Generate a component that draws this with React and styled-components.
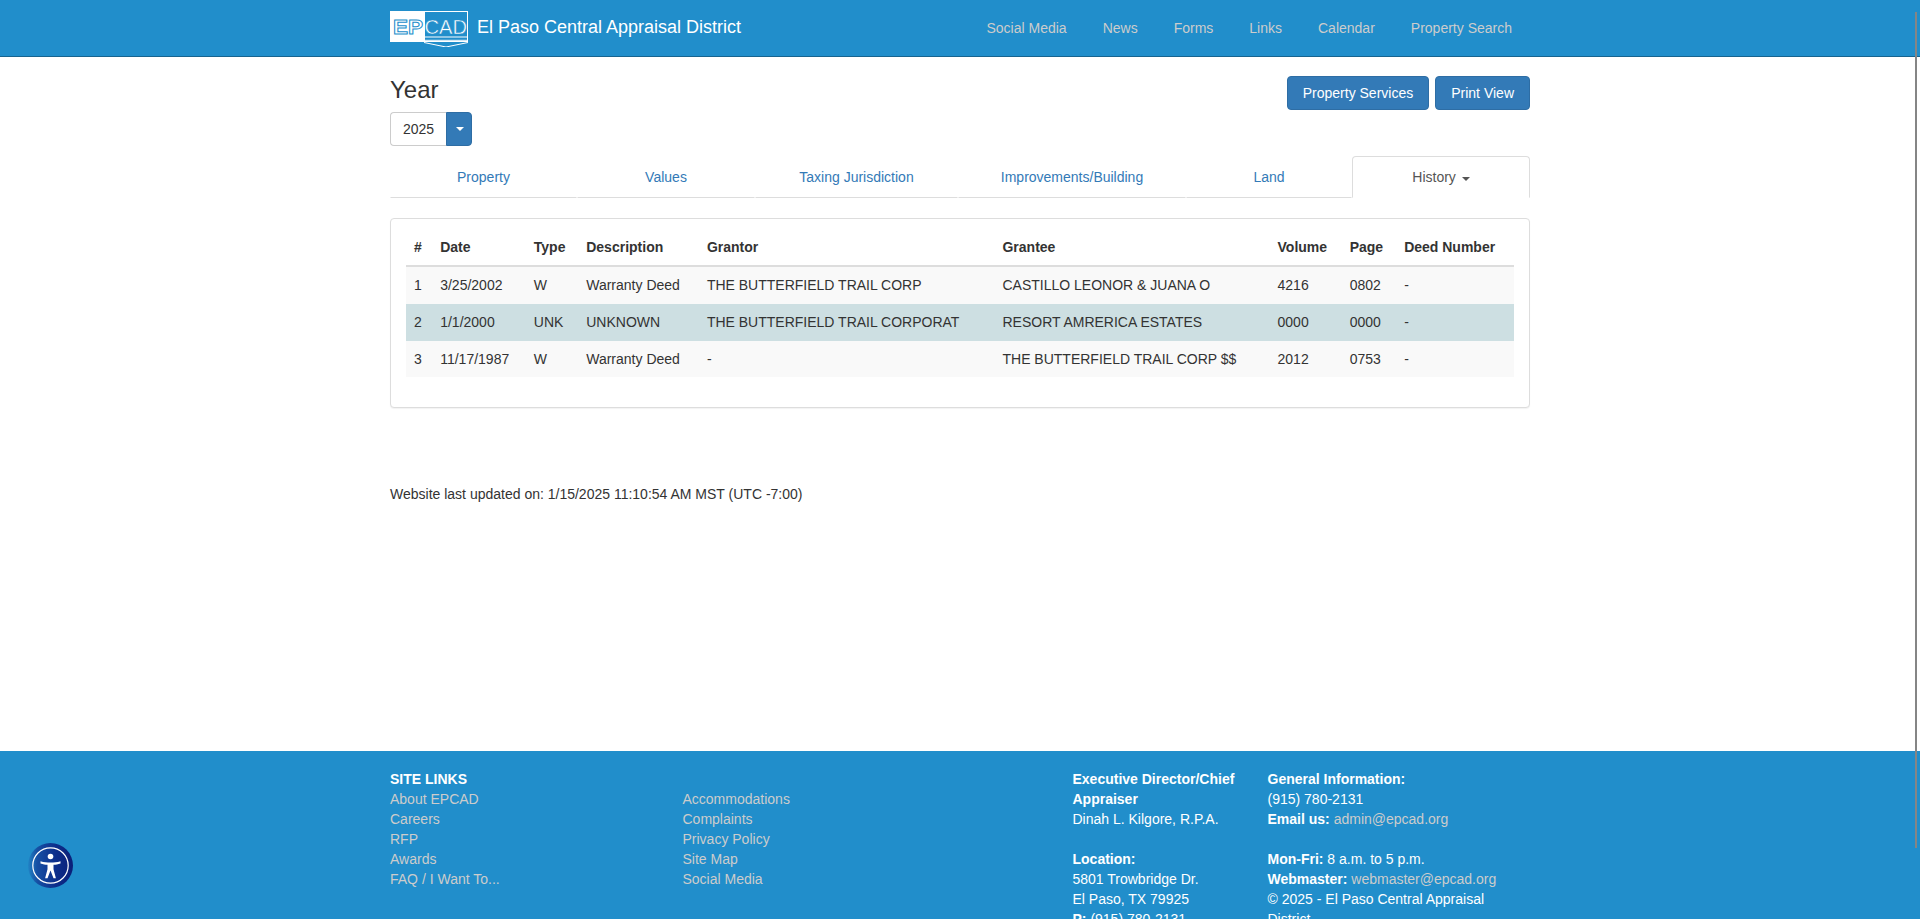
import React from 'react'
import styled, { createGlobalStyle } from 'styled-components'

const blue = '#218ecb'

const GlobalStyle = createGlobalStyle`
  html, body {
    margin: 0;
    padding: 0;
    height: 100%;
    overflow: hidden;
    background: #fff;
  }
  body {
    font-family: "Liberation Sans", Arial, sans-serif;
    font-size: 14px;
    line-height: 20px;
    color: #333;
  }
  * {
    box-sizing: border-box;
  }
`

const navItems = ['Social Media', 'News', 'Forms', 'Links', 'Calendar', 'Property Search']
const tabs = [
  { label: 'Property', width: 187 },
  { label: 'Values', width: 178 },
  { label: 'Taxing Jurisdiction', width: 203 },
  { label: 'Improvements/Building', width: 228 },
  { label: 'Land', width: 166 },
]
const columns = ['#', 'Date', 'Type', 'Description', 'Grantor', 'Grantee', 'Volume', 'Page', 'Deed Number']
const deeds = [
  ['1', '3/25/2002', 'W', 'Warranty Deed', 'THE BUTTERFIELD TRAIL CORP', 'CASTILLO LEONOR & JUANA O', '4216', '0802', '-'],
  ['2', '1/1/2000', 'UNK', 'UNKNOWN', 'THE BUTTERFIELD TRAIL CORPORAT', 'RESORT AMRERICA ESTATES', '0000', '0000', '-'],
  ['3', '11/17/1987', 'W', 'Warranty Deed', '-', 'THE BUTTERFIELD TRAIL CORP $$', '2012', '0753', '-'],
]
const linksLeft = ['About EPCAD', 'Careers', 'RFP', 'Awards', 'FAQ / I Want To...']
const linksRight = ['Accommodations', 'Complaints', 'Privacy Policy', 'Site Map', 'Social Media']

const EpcadLogo = () => (
  <svg width="78" height="36" viewBox="0 0 78 36">
    <rect x="0" y="0" width="34" height="31" fill="#fff" />
    <rect x="34.5" y="0.5" width="43" height="30" fill="none" stroke="#fff" />
    <text x="3" y="23" fontFamily="Liberation Sans" fontWeight="bold" fontSize="21" fill="#fff" stroke={blue} strokeWidth="1" textLength="30" lengthAdjust="spacingAndGlyphs">EP</text>
    <text x="34.5" y="23" fontFamily="Liberation Sans" fontSize="21" fill="#fff" stroke={blue} strokeWidth="0.5" textLength="42.5" lengthAdjust="spacingAndGlyphs">CAD</text>
    <path d="M34 26h44M34 29.3h44" stroke="#fff" />
    <path d="M34 31.5l22 4.500 22-4.500" fill="none" stroke="#fff" />
  </svg>
)

const AccessIcon = () => (
  <svg width="45" height="45" viewBox="0 0 45 45">
    <defs>
      <linearGradient id="accessFill" x1="0" x2="1" y1="0" y2="0">
        <stop offset="0" stopColor="#2084c6" />
        <stop offset="0.2" stopColor="#1650a4" />
        <stop offset="0.6" stopColor="#0d2f8c" />
        <stop offset="1" stopColor="#0a1f78" />
      </linearGradient>
    </defs>
    <circle cx="22.5" cy="22.5" r="22.5" fill="url(#accessFill)" />
    <circle cx="22.5" cy="22.5" r="17.7" fill="none" stroke="#fff" strokeWidth="1.2" />
    <circle cx="22.5" cy="13.5" r="2.8" fill="#fff" />
    <path d="M12.5 18.2c3.500 1 6.500 1.400 10 1.400s6.500-.4 10-1.400v2.200c-2.600.8-4.700 1.200-7 1.400v4.500l2.400 9h-2.400l-3-7.800-3 7.800h-2.400l2.400-9v-4.500c-2.300-.2-4.400-.6-7-1.400z" fill="#fff" />
  </svg>
)

const App = () => (
  <Page>
    <GlobalStyle />
    <Header>
      <HeaderInner>
        <Brand>
          <EpcadLogo />
          <BrandName>El Paso Central Appraisal District</BrandName>
        </Brand>
        <Nav>
          {navItems.map(item => <NavLink key={item} href="#">{item}</NavLink>)}
        </Nav>
      </HeaderInner>
    </Header>
    <Main>
      <TopRow>
        <div>
          <YearTitle>Year</YearTitle>
          <YearSelect>
            <YearValue>2025</YearValue>
            <YearToggle><Caret $color="#fff" /></YearToggle>
          </YearSelect>
        </div>
        <Actions>
          <ActionButton>Property Services</ActionButton>
          <ActionButton>Print View</ActionButton>
        </Actions>
      </TopRow>
      <Tabs>
        {tabs.map(tab => (
          <Tab key={tab.label} $width={tab.width}><TabLink href="#">{tab.label}</TabLink></Tab>
        ))}
        <Tab $width={178}><TabLink href="#" $active>History <Caret $color="#555" /></TabLink></Tab>
      </Tabs>
      <Panel>
        <Table>
          <thead>
            <tr>
              {columns.map(col => <Th key={col}>{col}</Th>)}
            </tr>
          </thead>
          <tbody>
            {deeds.map((deed, i) => (
              <Row key={deed[0]} $highlight={i === 1}>
                {deed.map((cell, j) => <Td key={j}>{cell}</Td>)}
              </Row>
            ))}
          </tbody>
        </Table>
      </Panel>
      <Updated>Website last updated on: 1/15/2025 11:10:54 AM MST (UTC -7:00)</Updated>
    </Main>
    <Footer>
      <FooterGrid>
        <FooterCol>
          <strong>SITE LINKS</strong>
          {linksLeft.map(link => <FooterLink key={link} href="#">{link}</FooterLink>)}
        </FooterCol>
        <FooterCol>
          <Spacer />
          {linksRight.map(link => <FooterLink key={link} href="#">{link}</FooterLink>)}
        </FooterCol>
        <FooterCol $start={4}>
          <strong>Executive Director/Chief Appraiser</strong>
          <span>Dinah L. Kilgore, R.P.A.</span>
          <Spacer />
          <strong>Location:</strong>
          <span>5801 Trowbridge Dr.</span>
          <span>El Paso, TX 79925</span>
          <span><strong>P:</strong> (915) 780-2131</span>
        </FooterCol>
        <FooterCol>
          <strong>General Information:</strong>
          <span>(915) 780-2131</span>
          <span><strong>Email us:</strong> <FooterLink href="#">admin@epcad.org</FooterLink></span>
          <Spacer />
          <span><strong>Mon-Fri:</strong> 8 a.m. to 5 p.m.</span>
          <span><strong>Webmaster:</strong> <FooterLink href="#">webmaster@epcad.org</FooterLink></span>
          <span>© 2025 - El Paso Central Appraisal District</span>
        </FooterCol>
      </FooterGrid>
    </Footer>
    <AccessButton aria-label="Accessibility"><AccessIcon /></AccessButton>
    <ScrollThumb />
  </Page>
)

const Page = styled.div`
  height: 919px;
  overflow: hidden;
`

const Header = styled.header`
  height: 57px;
  background: ${blue};
  border-bottom: 1px solid #17648f;
`

const HeaderInner = styled.div`
  width: 1140px;
  height: 56px;
  margin: 0 auto;
  display: flex;
  align-items: center;
  justify-content: space-between;
`

const Brand = styled.a`
  display: flex;
  align-items: center;
  gap: 9px;
  margin-top: 1px;
  color: #fff;
`

const BrandName = styled.span`
  font-size: 18px;
  margin-top: -3px;
`

const Nav = styled.nav`
  display: flex;
`

const NavLink = styled.a`
  padding: 0 18px;
  color: #ccc;
  text-decoration: none;
`

const Main = styled.main`
  width: 1140px;
  min-height: 694px;
  margin: 0 auto;
`

const TopRow = styled.div`
  display: flex;
  justify-content: space-between;
  align-items: flex-start;
  padding-top: 19px;
`

const YearTitle = styled.h3`
  margin: 0;
  padding-top: 1px;
  padding-bottom: 9px;
  font-size: 24px;
  font-weight: 500;
  line-height: 26.4px;
`

const YearSelect = styled.div`
  display: flex;
  width: 82px;
  height: 34px;
`

const YearValue = styled.div`
  flex: 1;
  padding: 6px 12px;
  border: 1px solid #ccc;
  border-right: 0;
  border-radius: 4px 0 0 4px;
  color: #333;
`

const YearToggle = styled.div`
  width: 26px;
  display: flex;
  align-items: center;
  justify-content: center;
  background: #337ab7;
  border: 1px solid #2e6da4;
  border-radius: 0 4px 4px 0;
`

const Caret = styled.span`
  display: inline-block;
  width: 0;
  height: 0;
  margin-left: 2px;
  vertical-align: middle;
  border-top: 4px solid ${props => props.$color};
  border-left: 4px solid transparent;
  border-right: 4px solid transparent;
`

const Actions = styled.div`
  display: flex;
  gap: 6px;
`

const ActionButton = styled.button`
  height: 34px;
  padding: 6px 15px;
  font: inherit;
  color: #fff;
  background: #337ab7;
  border: 1px solid #2e6da4;
  border-radius: 4px;
`

const Tabs = styled.ul`
  display: table;
  table-layout: fixed;
  width: 100%;
  margin: 10px 0 20px;
  padding: 0;
  list-style: none;
`

const Tab = styled.li`
  display: table-cell;
  width: ${props => props.$width}px;
`

const TabLink = styled.a`
  display: block;
  padding: 10px 15px;
  text-align: center;
  text-decoration: none;
  color: ${props => (props.$active ? '#555' : '#337ab7')};
  background: #fff;
  border: 1px solid ${props => (props.$active ? '#ddd' : 'transparent')};
  border-bottom: 1px solid ${props => (props.$active ? '#fff' : '#ddd')};
  border-radius: 4px 4px 0 0;
`

const Panel = styled.section`
  padding: 10px 15px;
  background: #fff;
  border: 1px solid #ddd;
  border-radius: 4px;
  box-shadow: 0 1px 1px rgba(0, 0, 0, 0.05);
`

const Table = styled.table`
  width: 100%;
  margin-bottom: 20px;
  border-collapse: collapse;
  border-spacing: 0;
`

const Th = styled.th`
  padding: 8px;
  text-align: left;
  vertical-align: bottom;
  border-bottom: 2px solid #ddd;
`

const Row = styled.tr`
  background: ${props => (props.$highlight ? '#cddfe2' : '#f9f9f9')};
`

const Td = styled.td`
  padding: 8px;
  border-top: 1px solid transparent;
  vertical-align: top;
`

const Updated = styled.p`
  margin: 76px 0 0;
`

const Footer = styled.footer`
  height: 260px;
  padding-top: 18px;
  background: ${blue};
  color: #fff;
`

const FooterGrid = styled.div`
  width: 1170px;
  margin: 0 auto;
  display: grid;
  grid-template-columns: 292.5px 292.5px 97.5px 195px 292.5px;
`

const FooterCol = styled.div`
  display: flex;
  flex-direction: column;
  align-items: flex-start;
  padding: 0 15px;
  ${props => props.$start && `grid-column-start: ${props.$start};`}
`

const FooterLink = styled.a`
  color: #ccc;
  text-decoration: none;
`

const Spacer = styled.div`
  height: 20px;
`

const AccessButton = styled.button`
  position: fixed;
  left: 28px;
  top: 843px;
  width: 45px;
  height: 45px;
  padding: 0;
  background: none;
  border: 0;
`

const ScrollThumb = styled.div`
  position: fixed;
  top: 12px;
  right: 3px;
  width: 2px;
  height: 836px;
  background: #858585;
`

export default App
